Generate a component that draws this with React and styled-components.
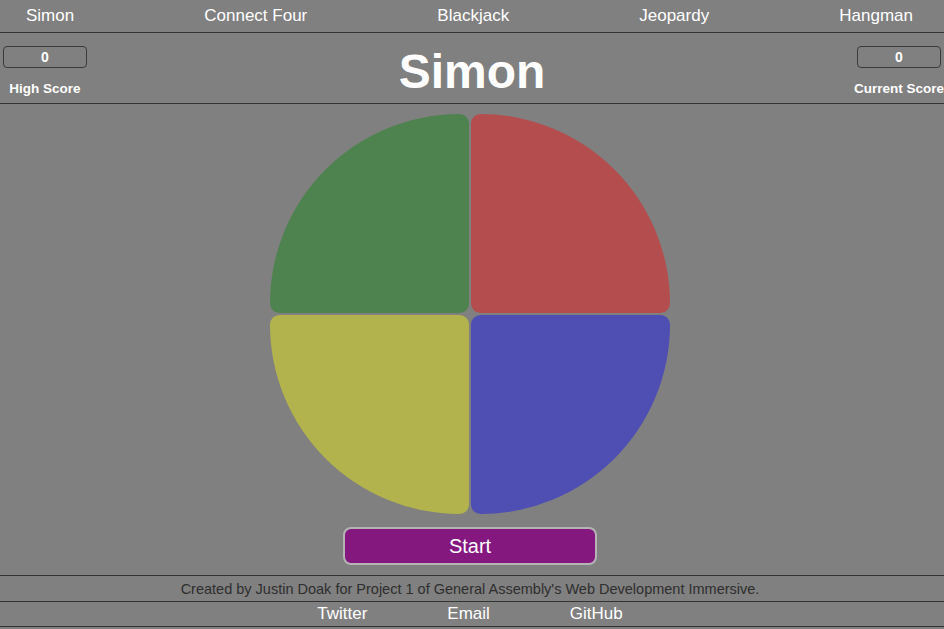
import React from "react";
import styled, { createGlobalStyle } from "styled-components";

const Global = createGlobalStyle`
  html, body { margin: 0; padding: 0; background: #808080; }
  body { font-family: "Liberation Sans", Arial, sans-serif; color: #fff; overflow: hidden; }
`;

const Page = styled.div`
  width: 944px;
  height: 629px;
  display: flex;
  flex-direction: column;
  overflow: hidden;
`;

const Nav = styled.nav`
  height: 32px;
  display: flex;
  justify-content: space-between;
  align-items: center;
  padding: 0 31px 0 26px;
  border-bottom: 1px solid #333;
`;

const NavLink = styled.a`
  font-size: 17px;
  color: #fff;
  text-decoration: none;
  line-height: 20px;
  margin-top: -1px;
`;

const Header = styled.header`
  height: 70px;
  display: grid;
  grid-template-columns: 84px 1fr 84px;
  padding: 0 3px;
  border-bottom: 1px solid #333;
`;

const ScoreCol = styled.div`
  display: flex;
  flex-direction: column;
  align-items: center;
  padding-top: 13px;
  white-space: nowrap;
`;

const ScoreBox = styled.div`
  box-sizing: border-box;
  width: 84px;
  height: 22px;
  border: 1px solid #3a3a3a;
  border-radius: 4px;
  display: flex;
  align-items: center;
  justify-content: center;
  font-size: 14px;
  font-weight: bold;
`;

const ScoreLabel = styled.div`
  margin-top: 13px;
  font-size: 13.5px;
  font-weight: bold;
  line-height: 16px;
`;

const Title = styled.h1`
  margin: 15px 0 0;
  font-size: 48px;
  line-height: 48px;
  font-weight: bold;
  text-align: center;
`;

const Main = styled.main`
  display: flex;
  flex-direction: column;
  align-items: center;
  padding: 10px 4px 0 0;
`;

const Board = styled.div`
  display: grid;
  grid-template-columns: 199px 199px;
  grid-template-rows: 199px 199px;
  gap: 2px;
`;

const Pad = styled.div`
  background: ${(p) => p.$color};
  border-radius: ${(p) => p.$radius};
`;

const StartButton = styled.button`
  margin-top: 13px;
  box-sizing: border-box;
  width: 254px;
  height: 38px;
  background: #84187f;
  border: 2px solid #b4b4b4;
  border-radius: 8px;
  color: #fff;
  font-family: "Liberation Sans", Arial, sans-serif;
  font-size: 20px;
  padding: 0;
`;

const Credit = styled.div`
  margin-top: 10px;
  height: 25px;
  border-top: 1px solid #333;
  border-bottom: 1px solid #333;
  display: flex;
  align-items: center;
  justify-content: center;
  font-size: 14.5px;
  color: #2e2e2e;
  padding-right: 4px;
`;

const FooterLinks = styled.div`
  height: 24px;
  border-bottom: 1px solid #333;
  display: flex;
  justify-content: center;
  align-items: center;
  gap: 80px;
  padding-right: 4px;
`;

export default function App() {
  return (
    <Page>
      <Global />
      <Nav>
        <NavLink href="#">Simon</NavLink>
        <NavLink href="#">Connect Four</NavLink>
        <NavLink href="#">Blackjack</NavLink>
        <NavLink href="#">Jeopardy</NavLink>
        <NavLink href="#">Hangman</NavLink>
      </Nav>
      <Header>
        <ScoreCol>
          <ScoreBox>0</ScoreBox>
          <ScoreLabel>High Score</ScoreLabel>
        </ScoreCol>
        <Title>Simon</Title>
        <ScoreCol>
          <ScoreBox>0</ScoreBox>
          <ScoreLabel>Current Score</ScoreLabel>
        </ScoreCol>
      </Header>
      <Main>
        <Board>
          <Pad $color="#4e834f" $radius="199px 10px 10px 10px" />
          <Pad $color="#b44e4e" $radius="10px 199px 10px 10px" />
          <Pad $color="#b3b34d" $radius="10px 10px 10px 199px" />
          <Pad $color="#4e4eb3" $radius="10px 10px 199px 10px" />
        </Board>
        <StartButton>Start</StartButton>
      </Main>
      <Credit>
        Created by Justin Doak for Project 1 of General Assembly's Web Development Immersive.
      </Credit>
      <FooterLinks>
        <NavLink href="#">Twitter</NavLink>
        <NavLink href="#">Email</NavLink>
        <NavLink href="#">GitHub</NavLink>
      </FooterLinks>
    </Page>
  );
}
